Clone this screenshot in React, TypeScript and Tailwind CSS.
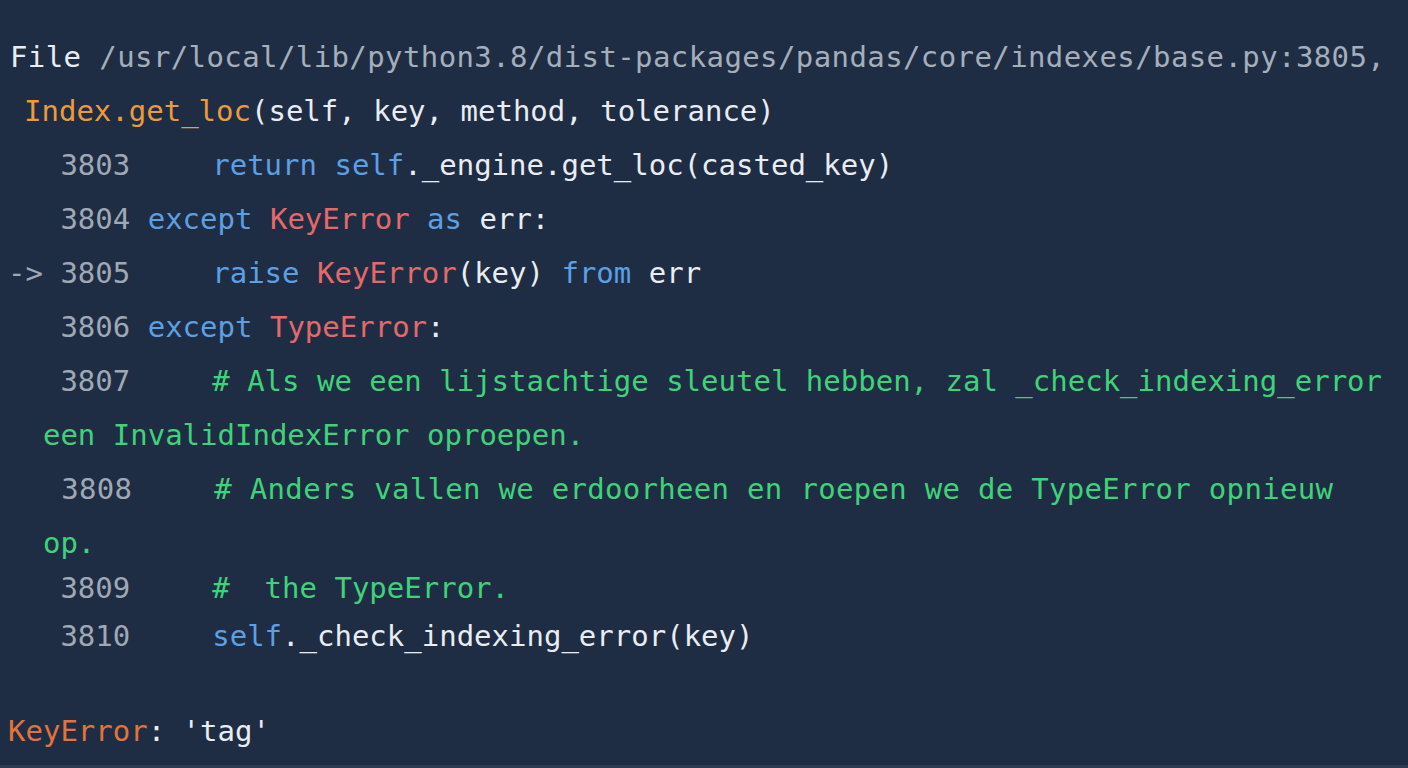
const mono = { fontFamily: '"DejaVu Sans Mono", "Liberation Mono", monospace' }

const Num = ({ children }: { children: string }) => <span className="text-[#a0a8b5]">{children}</span>
const Kw = ({ children }: { children: string }) => <span className="text-[#5d9fe3]">{children}</span>
const Err = ({ children }: { children: string }) => <span className="text-[#e36a6a]">{children}</span>
const Cm = ({ children }: { children: string }) => <span className="text-[#3fd27a]">{children}</span>
const Indent = () => <span className="inline-block w-[82px]" />

export default function App() {
  return (
    <div
      className="h-[768px] w-full overflow-hidden bg-[#1f2d44] border-b-[3px] border-[#2c3b54] text-[29px] text-[#e9ecf1] whitespace-pre"
      style={mono}
    >
      <div className="flex flex-col pt-[30px] pl-[8px] leading-[54px]">
        <div className="pl-[2px] tracking-[0.4px]">
          <span>File </span>
          <span className="text-[#a5aebb]">/usr/local/lib/python3.8/dist-packages/pandas/core/indexes/base.py:3805,</span>
        </div>
        <div className="pl-[16px]">
          <span className="text-[#e99b3d]">Index.get_loc</span>
          <span>(self, key, method, tolerance)</span>
        </div>
        <div>
          <Num>{"   3803"}</Num>
          <Indent />
          <Kw>return</Kw> <Kw>self</Kw>._engine.get_loc(casted_key)
        </div>
        <div>
          <Num>{"   3804"}</Num> <Kw>except</Kw> <Err>KeyError</Err> <Kw>as</Kw> err:
        </div>
        <div>
          <Num>{"-> 3805"}</Num>
          <Indent />
          <Kw>raise</Kw> <Err>KeyError</Err>(key) <Kw>from</Kw> err
        </div>
        <div>
          <Num>{"   3806"}</Num> <Kw>except</Kw> <Err>TypeError</Err>:
        </div>
        <div>
          <Num>{"   3807"}</Num>
          <Indent />
          <Cm># Als we een lijstachtige sleutel hebben, zal _check_indexing_error</Cm>
        </div>
        <div>
          <Cm>{"  een InvalidIndexError oproepen."}</Cm>
        </div>
        <div className="tracking-[0.3px]">
          <Num>{"   3808"}</Num>
          <Indent />
          <Cm># Anders vallen we erdoorheen en roepen we de TypeError opnieuw</Cm>
        </div>
        <div>
          <Cm>{"  op."}</Cm>
        </div>
        <div className="-mt-[5px] leading-[46px]">
          <Num>{"   3809"}</Num>
          <Indent />
          <Cm>{"#  the TypeError."}</Cm>
        </div>
        <div className="leading-[50px]">
          <Num>{"   3810"}</Num>
          <Indent />
          <Kw>self</Kw>._check_indexing_error(key)
        </div>
        <div className="mt-[43px]">
          <span className="text-[#e2733d]">KeyError</span>: 'tag'
        </div>
      </div>
    </div>
  )
}
